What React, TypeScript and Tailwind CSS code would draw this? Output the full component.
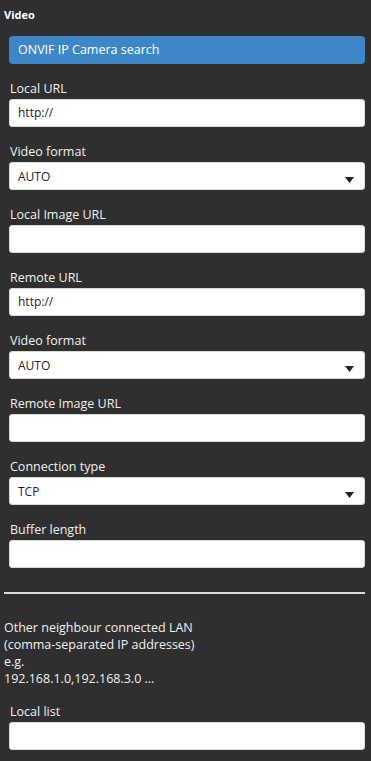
import React from "react";

const font = { fontFamily: '"Open Sans", "Noto Sans", sans-serif' };

function Label({ children }: { children: React.ReactNode }) {
  return <div className="text-[12.5px] leading-[16px] text-[#f0f0f0] mb-[2px] px-[1px]">{children}</div>;
}

function TextField({ label, value }: { label: string; value?: string }) {
  return (
    <div className="mt-[17px]">
      <Label>{label}</Label>
      <div className="h-[28px] bg-white rounded-[3px] border border-[#d8d8d8] flex items-center px-[8px] text-[12px] text-[#222]">
        {value}
      </div>
    </div>
  );
}

function SelectField({ label, value }: { label: string; value: string }) {
  return (
    <div className="mt-[17px]">
      <Label>{label}</Label>
      <div className="h-[28px] bg-white rounded-[3px] border border-[#d8d8d8] flex items-start justify-between pl-[8px] pr-[10px] text-[12px] text-[#222]">
        <span className="mt-[5px]">{value}</span>
        <svg width="9" height="6" viewBox="0 0 9 6" className="mt-[14px]">
          <polygon points="0,0 9,0 4.5,6" fill="#222" />
        </svg>
      </div>
    </div>
  );
}

export default function App() {
  return (
    <div className="w-[371px] min-h-[761px] bg-[#2f2f2f] pl-[4px] pr-[6px] pt-[8px] pb-[8px]" style={font}>
      <div className="text-[11px] leading-[14px] font-bold text-white">Video</div>
      <div className="pl-[5px]">
        <div className="mt-[14px] h-[28px] rounded-[4px] bg-[#3d87c9] flex items-center px-[9px] text-[12.5px] text-white">
          ONVIF IP Camera search
        </div>
        <div className="mt-[1px]" />
        <TextField label="Local URL" value="http://" />
        <SelectField label="Video format" value="AUTO" />
        <TextField label="Local Image URL" />
        <div className="mt-[4px]" />
        <TextField label="Remote URL" value="http://" />
        <SelectField label="Video format" value="AUTO" />
        <TextField label="Remote Image URL" />
        <SelectField label="Connection type" value="TCP" />
        <TextField label="Buffer length" />
      </div>
      <div className="mt-[24px] h-[2px] bg-[#dcdcdc]" />
      <div className="mt-[25px] text-[12.5px] leading-[17px] text-[#f0f0f0]">
        <div>Other neighbour connected LAN</div>
        <div>(comma-separated IP addresses)</div>
        <div>e.g.</div>
        <div>192.168.1.0,192.168.3.0 ...</div>
      </div>
      <div className="pl-[5px]">
        <TextField label="Local list" />
      </div>
    </div>
  );
}
